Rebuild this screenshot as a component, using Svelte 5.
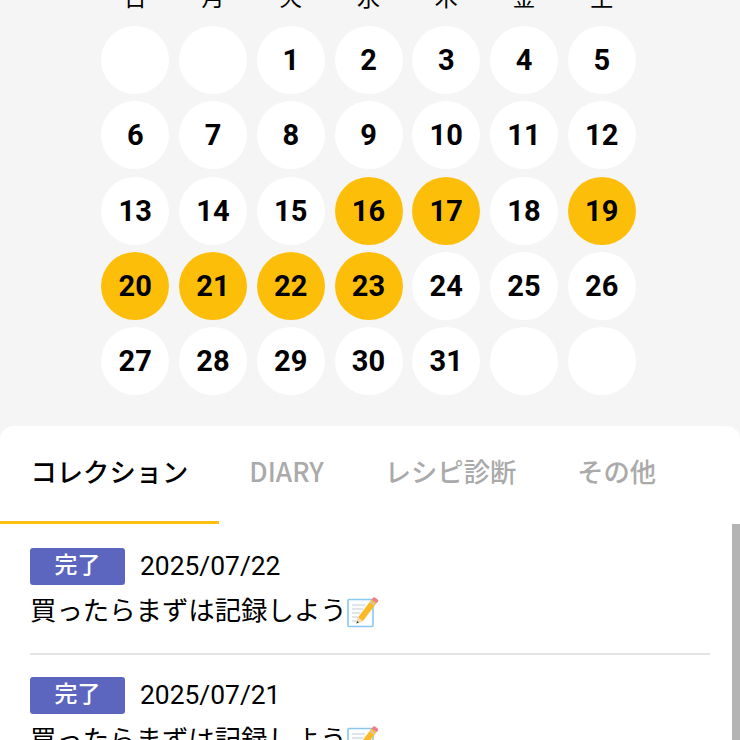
<script>
  const weekdays = ['日', '月', '火', '水', '木', '金', '土'];
  const highlighted = [16, 17, 19, 20, 21, 22, 23];
  const days = [null, null, ...Array.from({ length: 31 }, (_, i) => i + 1), null, null];
  const tabs = ['コレクション', 'DIARY', 'レシピ診断', 'その他'];
  const items = [
    { date: '2025/07/22', title: '買ったらまずは記録しよう' },
    { date: '2025/07/21', title: '買ったらまずは記録しよう' }
  ];
</script>

<div class="page">
  <section class="calendar">
    <div class="grid weekdays">
      {#each weekdays as w}
        <div class="weekday">{w}</div>
      {/each}
    </div>
    <div class="grid days">
      {#each days as d}
        <div class="day" class:on={d !== null && highlighted.includes(d)}>{d ?? ''}</div>
      {/each}
    </div>
  </section>

  <section class="sheet">
    <nav class="tabs">
      {#each tabs as t, i}
        <div class="tab" class:active={i === 0}>{t}</div>
      {/each}
    </nav>
    <div class="list">
      <div class="scrollbar"></div>
      {#each items as item}
        <article class="item">
          <div class="meta">
            <span class="badge">完了</span>
            <span class="date">{item.date}</span>
          </div>
          <div class="title">
            <span>{item.title}</span>
            <svg class="memo" viewBox="0 0 32 32" aria-hidden="true">
              <rect x="1" y="3.5" width="25" height="27" rx="1" fill="#fbfdff" stroke="#8cc8ee" stroke-width="1.6" />
              <path d="M5 9h13M5 13h11M5 17h8M5 21h6M5 25h5" stroke="#c4ced6" stroke-width="1.2" fill="none" />
              <path d="M9.5 27.5l1.6-6.2L24.6 3.6l4.8 3.7-13.5 17.7z" fill="#fbb925" />
              <path d="M24.6 3.6l1.3-1.7a1.6 1.6 0 0 1 2.2-.3l2.5 1.9a1.6 1.6 0 0 1 .3 2.2l-1.5 1.6z" fill="#ee7f86" />
              <path d="M23.6 4.9l4.8 3.7-.9 1.2-4.8-3.7z" fill="#c9ced2" />
              <path d="M9.5 27.5l1.6-6.2 4.8 3.7z" fill="#f5dcb4" />
              <path d="M9.5 27.5l.6-2.4 1.8 1.4z" fill="#333" />
            </svg>
          </div>
        </article>
      {/each}
    </div>
  </section>
</div>

<style>
  :global(body) {
    margin: 0;
    background: #f5f5f5;
  }
  .page {
    height: 740px;
    overflow: hidden;
    display: flex;
    flex-direction: column;
    font-family: Roboto, "Noto Sans CJK JP", sans-serif;
    color: #000;
    background: #f5f5f5;
  }
  .calendar {
    flex: none;
    height: 426px;
    display: flex;
    flex-direction: column;
    align-items: center;
    box-sizing: border-box;
    padding-right: 3px;
  }
  .grid {
    display: grid;
    grid-template-columns: repeat(7, 68px);
    column-gap: 9.75px;
  }
  .weekdays {
    margin-top: -14px;
    height: 40px;
    align-items: start;
  }
  .weekday {
    text-align: center;
    font-size: 23px;
    line-height: 26px;
  }
  .days {
    row-gap: 7.25px;
  }
  .day {
    width: 68px;
    height: 68px;
    border-radius: 50%;
    background: #fff;
    display: flex;
    align-items: center;
    justify-content: center;
    font-size: 29px;
    font-weight: 700;
  }
  .day.on {
    background: #fdbe0a;
  }
  .sheet {
    flex: 1;
    min-height: 0;
    background: #fff;
    border-radius: 14px 14px 0 0;
    display: flex;
    flex-direction: column;
  }
  .tabs {
    flex: none;
    display: flex;
    height: 98px;
    box-sizing: border-box;
  }
  .tab {
    padding: 0 30.5px;
    font-family: "Noto Sans CJK JP", sans-serif;
    font-size: 26.3px;
    font-weight: 500;
    line-height: 90px;
    color: #aaa;
    white-space: nowrap;
    box-sizing: border-box;
    height: 98px;
    border-bottom: 3px solid transparent;
  }
  .tab.active {
    color: #000;
    border-bottom-color: #fdc010;
  }
  .list {
    position: relative;
    flex: 1;
    min-height: 0;
    overflow: hidden;
    padding: 24px 30px 0;
  }
  .scrollbar {
    position: absolute;
    top: 0;
    right: 0;
    width: 8px;
    height: 216px;
    background: #b4b4b4;
  }
  .item {
    height: 105px;
    margin-bottom: 22px;
    border-bottom: 2px solid #e4e4e4;
  }
  .meta {
    display: flex;
    align-items: center;
    gap: 15px;
    height: 37px;
  }
  .badge {
    width: 95px;
    height: 37px;
    background: #5c66bf;
    border-radius: 3px;
    color: #fff;
    font-size: 23px;
    font-weight: 500;
    line-height: 35px;
    text-align: center;
  }
  .date {
    font-size: 26.4px;
    line-height: 36px;
    margin-top: -1px;
  }
  .title {
    display: flex;
    align-items: center;
    margin-top: 6px;
    font-size: 26.4px;
    line-height: 40px;
    white-space: nowrap;
  }
  .memo {
    width: 32px;
    height: 32px;
    flex: none;
    margin-top: 1px;
  }
</style>
